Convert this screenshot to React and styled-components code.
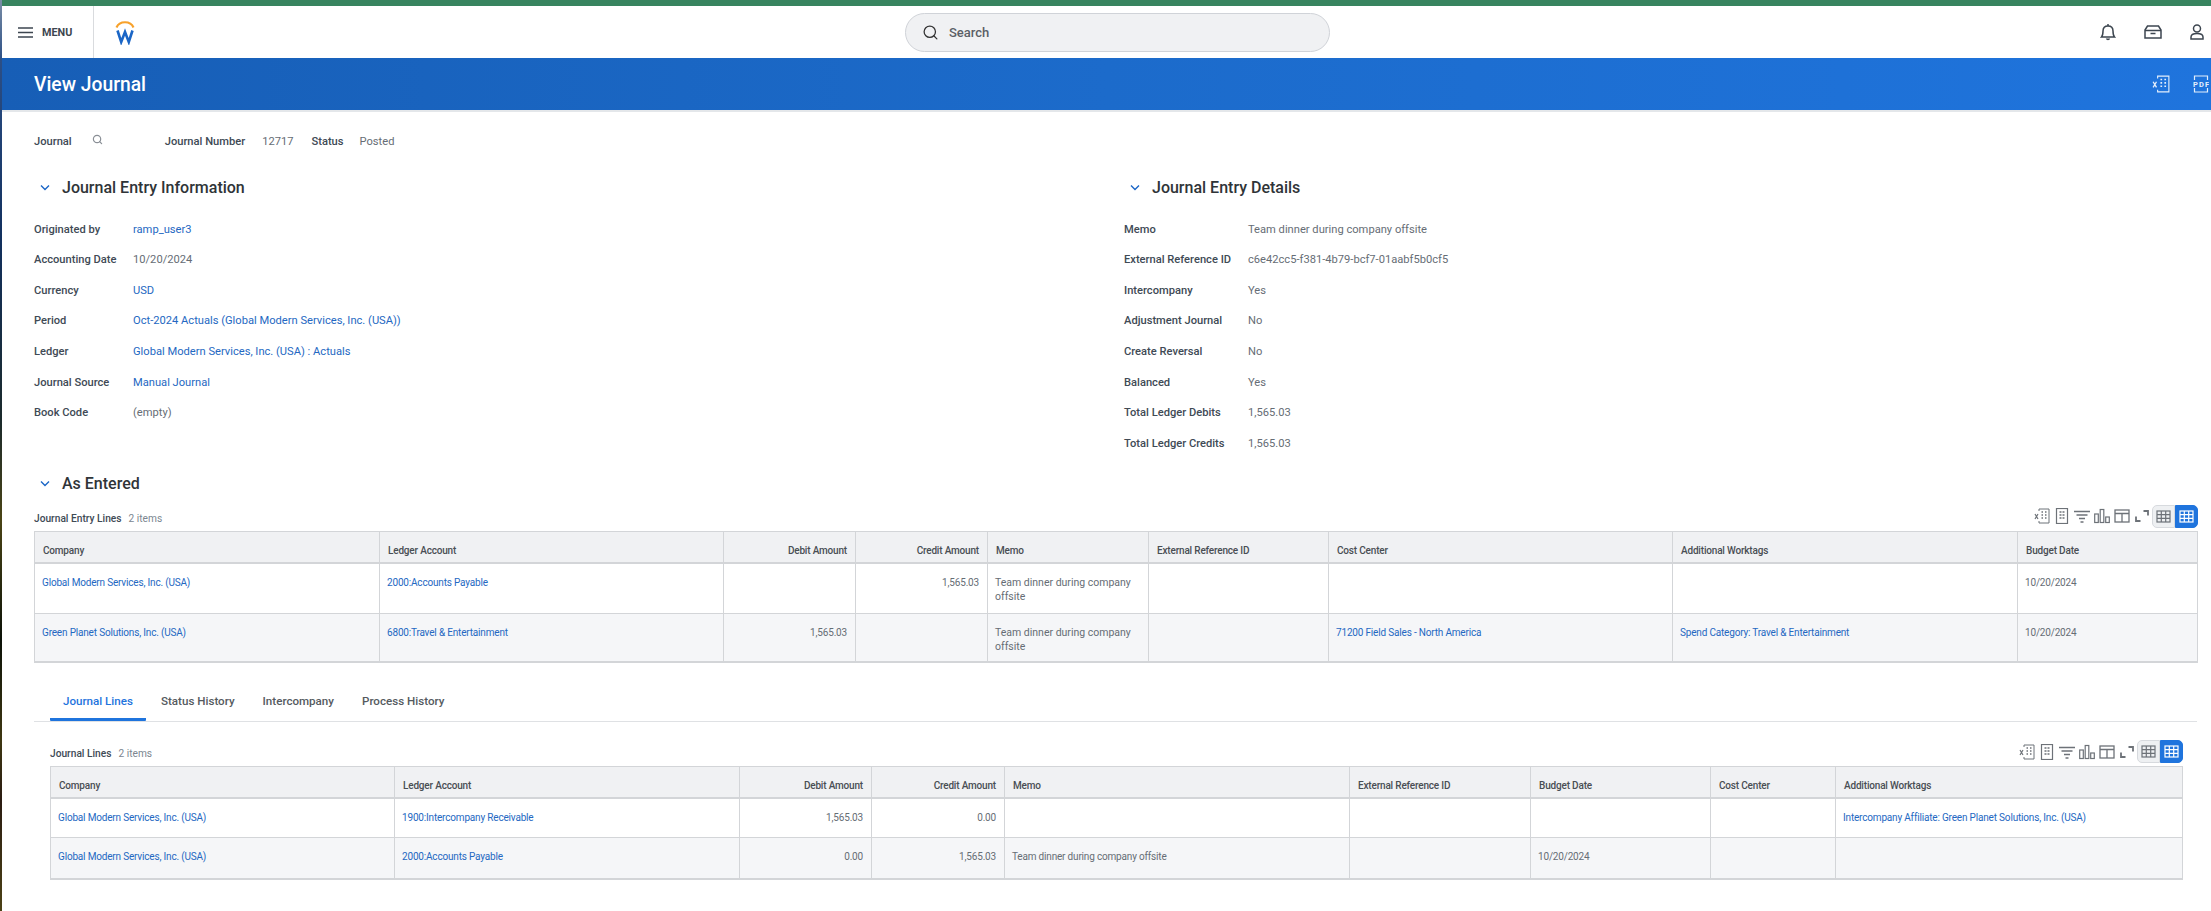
import styled, { createGlobalStyle } from "styled-components";
import { Search } from "lucide-react";

const GlobalStyle = createGlobalStyle`
  html, body {
    margin: 0;
    padding: 0;
    background: #fff;
    font-family: Roboto, "Liberation Sans", sans-serif;
  }
`;

const entryColumns = [
  { label: "Company", width: 345 },
  { label: "Ledger Account", width: 344 },
  { label: "Debit Amount", width: 132, right: true },
  { label: "Credit Amount", width: 132, right: true },
  { label: "Memo", width: 161 },
  { label: "External Reference ID", width: 180 },
  { label: "Cost Center", width: 344 },
  { label: "Additional Worktags", width: 345 },
  { label: "Budget Date", width: 180 },
];

const entryRows = [
  [
    { text: "Global Modern Services, Inc. (USA)", link: true },
    { text: "2000:Accounts Payable", link: true },
    {},
    { text: "1,565.03" },
    { text: "Team dinner during company offsite", large: true },
    {},
    {},
    {},
    { text: "10/20/2024" },
  ],
  [
    { text: "Green Planet Solutions, Inc. (USA)", link: true },
    { text: "6800:Travel & Entertainment", link: true },
    { text: "1,565.03" },
    {},
    { text: "Team dinner during company offsite", large: true },
    {},
    { text: "71200 Field Sales - North America", link: true },
    { text: "Spend Category: Travel & Entertainment", link: true },
    { text: "10/20/2024" },
  ],
];

const lineColumns = [
  { label: "Company", width: 344 },
  { label: "Ledger Account", width: 345 },
  { label: "Debit Amount", width: 132, right: true },
  { label: "Credit Amount", width: 133, right: true },
  { label: "Memo", width: 345 },
  { label: "External Reference ID", width: 181 },
  { label: "Budget Date", width: 180 },
  { label: "Cost Center", width: 125 },
  { label: "Additional Worktags", width: 347 },
];

const lineRows = [
  [
    { text: "Global Modern Services, Inc. (USA)", link: true },
    { text: "1900:Intercompany Receivable", link: true },
    { text: "1,565.03" },
    { text: "0.00" },
    {},
    {},
    {},
    {},
    { text: "Intercompany Affiliate: Green Planet Solutions, Inc. (USA)", link: true },
  ],
  [
    { text: "Global Modern Services, Inc. (USA)", link: true },
    { text: "2000:Accounts Payable", link: true },
    { text: "0.00" },
    { text: "1,565.03" },
    { text: "Team dinner during company offsite" },
    {},
    { text: "10/20/2024" },
    {},
    {},
  ],
];

const infoFields = [
  { label: "Originated by", value: "ramp_user3", link: true },
  { label: "Accounting Date", value: "10/20/2024" },
  { label: "Currency", value: "USD", link: true },
  { label: "Period", value: "Oct-2024 Actuals (Global Modern Services, Inc. (USA))", link: true },
  { label: "Ledger", value: "Global Modern Services, Inc. (USA) : Actuals", link: true },
  { label: "Journal Source", value: "Manual Journal", link: true },
  { label: "Book Code", value: "(empty)" },
];

const detailFields = [
  { label: "Memo", value: "Team dinner during company offsite" },
  { label: "External Reference ID", value: "c6e42cc5-f381-4b79-bcf7-01aabf5b0cf5" },
  { label: "Intercompany", value: "Yes" },
  { label: "Adjustment Journal", value: "No" },
  { label: "Create Reversal", value: "No" },
  { label: "Balanced", value: "Yes" },
  { label: "Total Ledger Debits", value: "1,565.03" },
  { label: "Total Ledger Credits", value: "1,565.03" },
];

const Frame = styled.div`
  display: flex;
  height: 911px;
  overflow: hidden;
`;

const DesktopEdge = styled.div`
  width: 2px;
  flex: none;
  background: linear-gradient(
    180deg,
    #7a8ea6 0,
    #2c4f86 60px,
    #12305e 240px,
    #1b2a2c 420px,
    #4a4416 520px,
    #0c1208 640px,
    #3e3712 740px,
    #2b1c12 800px,
    #4c4216 911px
  );
`;

const Window = styled.div`
  flex: 1;
  min-width: 0;
  background: #fff;
`;

const GreenStrip = styled.div`
  height: 6px;
  background: #38845f;
`;

const Nav = styled.header`
  height: 52px;
  display: grid;
  grid-template-columns: 903px 425px 1fr;
  align-items: center;
`;

const NavLeft = styled.div`
  display: flex;
  align-items: center;
  height: 100%;
`;

const MenuButton = styled.div`
  width: 92px;
  height: 100%;
  box-sizing: border-box;
  display: flex;
  align-items: center;
  gap: 9px;
  padding-left: 16px;
  border-right: 1px solid #d9dbde;
  color: #3d4650;
  font-size: 10.8px;
  font-weight: 700;
`;

const LogoWrap = styled.div`
  margin-left: 21px;
  display: flex;
`;

const SearchBox = styled.div`
  height: 39px;
  box-sizing: border-box;
  display: flex;
  align-items: center;
  gap: 10px;
  padding-left: 16px;
  border: 1px solid #d0d3d8;
  border-radius: 20px;
  background: #f0f1f3;
  color: #5b5f66;
  font-size: 13px;
  font-weight: 500;
`;

const NavIcons = styled.div`
  display: flex;
  justify-content: flex-end;
  align-items: center;
  gap: 28px;
  padding-right: 7px;
  color: #3d4650;
`;

const Banner = styled.div`
  height: 52px;
  display: flex;
  align-items: center;
  justify-content: space-between;
  padding: 0 2px 0 32px;
  background: linear-gradient(90deg, #175eb6 0%, #1c6bcb 50%, #1f74dd 100%);
  border-bottom: 2px solid #e4e7ea;
`;

const PageTitle = styled.h1`
  margin: 0;
  color: #fff;
  font-size: 19.3px;
  font-weight: 500;
`;

const BannerIcons = styled.div`
  display: flex;
  align-items: center;
  gap: 23px;
  color: #e3eefb;
`;

const Content = styled.main`
  padding: 19px 14px 0 32px;
`;

const MetaRow = styled.div`
  height: 20px;
  display: flex;
  align-items: center;
  font-size: 11.15px;
`;

const MetaLabel = styled.span`
  color: #404a55;
  font-weight: 500;
  margin-right: ${(p) => p.$gap}px;
`;

const MetaValue = styled.span`
  color: #666d75;
  margin-right: ${(p) => p.$gap || 0}px;
`;

const MetaSearch = styled.span`
  display: flex;
  color: #8a8f96;
  margin: -3px 62px 0 0;
`;

const TwoColumns = styled.div`
  display: grid;
  grid-template-columns: 1090px 1fr;
  margin-top: 24px;
`;

const SectionHead = styled.div`
  height: 24px;
  display: flex;
  align-items: center;
  gap: 12px;
  padding-left: 6px;
  margin-top: ${(p) => p.$top || 0}px;
  color: #2f3438;
  font-size: 16px;
  font-weight: 500;
`;

const Chevron = styled.svg`
  width: 10px;
  height: 7px;
  fill: none;
  stroke: #1b66c6;
  stroke-width: 1.4;
`;

const Fields = styled.dl`
  margin: 14.7px 0 0;
`;

const FieldRow = styled.div`
  height: 30.67px;
  display: flex;
  align-items: center;
  font-size: 11.15px;
`;

const FieldLabel = styled.dt`
  width: ${(p) => p.$width}px;
  flex: none;
  color: #404a55;
  font-weight: 500;
`;

const FieldValue = styled.dd`
  margin: 0;
  color: ${(p) => (p.$link ? "#2468c2" : "#666d75")};
`;

const TableBlock = styled.section`
  margin: ${(p) => p.$top}px 0 0 ${(p) => p.$inset}px;
  width: ${(p) => p.$width}px;
`;

const TableBar = styled.div`
  height: 23px;
  margin-bottom: 3px;
  display: flex;
  align-items: center;
  justify-content: space-between;
`;

const TableName = styled.div`
  margin-top: 4px;
  font-size: 10.2px;
  font-weight: 500;
  color: #404a55;

  span {
    margin-left: 7px;
    font-weight: 400;
    color: #7c8690;
  }
`;

const Tools = styled.div`
  display: flex;
  align-items: center;
  gap: 4px;
  margin-right: -1px;
  color: #6d7278;
`;

const ViewToggle = styled.div`
  display: flex;
  margin-left: -2px;
`;

const ToggleButton = styled.div`
  width: 23px;
  height: 23px;
  box-sizing: border-box;
  display: flex;
  align-items: center;
  justify-content: center;
  background: ${(p) => (p.$active ? "#1f74dd" : "#eef0f2")};
  color: ${(p) => (p.$active ? "#fff" : "#6d7278")};
  border: 1px solid ${(p) => (p.$active ? "#1f74dd" : "#d7dade")};
  border-radius: ${(p) => (p.$active ? "0 5px 5px 0" : "5px 0 0 5px")};
`;

const Table = styled.table`
  width: 100%;
  table-layout: fixed;
  border-collapse: collapse;
  border: 1px solid #d3d5d8;
  border-bottom-width: 2px;
  font-size: 10px;
  letter-spacing: -0.18px;
`;

const Col = styled.col`
  width: ${(p) => p.$width}px;
`;

const HeadCell = styled.th`
  height: ${(p) => p.$height}px;
  box-sizing: border-box;
  padding: 6px 8px 0;
  background: #f0f1f3;
  border-left: 1px solid #d3d5d8;
  border-bottom: 2px solid #d3d5d8;
  color: #494e54;
  font-weight: 500;
  text-align: ${(p) => (p.$right ? "right" : "left")};
`;

const BodyRow = styled.tr`
  height: ${(p) => p.$height}px;
  background: ${(p) => (p.$striped ? "#f5f6f8" : "#fff")};
`;

const BodyCell = styled.td`
  padding: 12px 8px 0 7px;
  vertical-align: top;
  line-height: 14px;
  border-left: 1px solid #d3d5d8;
  border-top: 1px solid #d3d5d8;
  color: ${(p) => (p.$link ? "#2468c2" : "#666d75")};
  font-size: ${(p) => (p.$large ? "10.5px" : "inherit")};
  letter-spacing: ${(p) => (p.$large ? "0" : "inherit")};
  text-align: ${(p) => (p.$right ? "right" : "left")};
`;

const TabStrip = styled.nav`
  margin-top: 20px;
  height: 39px;
  box-sizing: border-box;
  padding-left: 16px;
  display: flex;
  gap: 2px;
  border-bottom: 1px solid #dfe1e4;
`;

const Tab = styled.div`
  padding: 11px 13px 0;
  font-size: 11.6px;
  font-weight: 500;
  color: ${(p) => (p.$active ? "#1f74dd" : "#555a60")};
  border-bottom: ${(p) => (p.$active ? "3px solid #1f74dd" : "none")};
  border-radius: 0 0 1px 1px;
`;

const Logo = () => (
  <svg width="20" height="26" viewBox="0 0 20 26" fill="none">
    <path d="M1.5 8.5C4.5 1.5 15.5 1.5 18.5 8.5" stroke="#f7a12b" strokeWidth="2.2" />
    <path d="M2.5 11.5L6.2 23L10 13L13.8 23L17.5 11.5" stroke="#1b66c6" strokeWidth="2.6" />
  </svg>
);

const MenuIcon = () => (
  <svg width="15" height="11" viewBox="0 0 15 11" stroke="currentColor" strokeWidth="1.3">
    <path d="M0 1h15M0 5.5h15M0 10h15" />
  </svg>
);

const BellIcon = () => (
  <svg width="16" height="18" viewBox="0 0 16 18" fill="none" stroke="currentColor" strokeWidth="1.5">
    <path d="M1.5 14c1.5-1.5 1.5-3 1.5-6 0-3 2-5 5-5s5 2 5 5c0 3 0 4.500 1.500 6z" />
    <path d="M8 1v2M6.500 15.500c.5 1.300 2.500 1.300 3 0" />
  </svg>
);

const InboxIcon = () => (
  <svg width="18" height="14" viewBox="0 0 18 14" fill="none" stroke="currentColor" strokeWidth="1.5">
    <path d="M1 5L3.500 1h11L17 5v8H1z" />
    <path d="M1 5.500h16M6.500 8.500h5" />
  </svg>
);

const UserIcon = () => (
  <svg width="14" height="16" viewBox="0 0 14 16" fill="none" stroke="currentColor" strokeWidth="1.5">
    <circle cx="7" cy="4.500" r="3.500" />
    <path d="M1 15v-2c0-2 2-3.500 6-3.500s6 1.500 6 3.500v2z" />
  </svg>
);

const ExcelIcon = ({ size = 16 }) => (
  <svg width={size} height={size} viewBox="0 0 16 16" fill="none" stroke="currentColor">
    <path d="M5 3V1h10v14H5v-2" />
    <path d="M7.500 4h1.500M11 4h1.500M7.500 7h1.500M11 7h1.500M7.500 10h1.500M11 10h1.500" strokeWidth="1.500" />
    <path d="M1 6l3 5M4 6l-3 5" strokeWidth="1.200" />
  </svg>
);

const PdfIcon = () => (
  <svg width="16" height="18" viewBox="0 0 16 18" fill="none" stroke="currentColor" strokeWidth="1.2">
    <path d="M1.500 5V1h13v4M1.500 13v4h13v-4" />
    <text
      x="0"
      y="11.500"
      fontSize="7.500"
      fontWeight="700"
      textLength="16"
      fontFamily="Roboto, sans-serif"
      fill="currentColor"
      stroke="none"
    >
      PDF
    </text>
  </svg>
);

const DocIcon = () => (
  <svg width="16" height="16" viewBox="0 0 16 16" fill="none" stroke="currentColor">
    <rect x="2.500" y="0.500" width="11" height="15" strokeWidth="1.200" />
    <path d="M5.500 4h2M8.500 4h2M5.500 7h2M8.500 7h2M5.500 10h2M8.500 10h2" strokeWidth="1.500" />
  </svg>
);

const FilterIcon = () => (
  <svg width="16" height="16" viewBox="0 0 16 16" stroke="currentColor" strokeWidth="1.300">
    <path d="M0 3.500h16M2.500 7h11M5 10.500h6M6.500 14h3" />
  </svg>
);

const ChartIcon = () => (
  <svg width="16" height="16" viewBox="0 0 16 16" fill="none" stroke="currentColor" strokeWidth="1.200">
    <rect x="0.700" y="6" width="3.600" height="8.500" />
    <rect x="6.200" y="1.500" width="3.600" height="13" />
    <rect x="11.700" y="9" width="3.600" height="5.500" />
  </svg>
);

const ColumnsIcon = () => (
  <svg width="16" height="16" viewBox="0 0 16 16" fill="none" stroke="currentColor" strokeWidth="1.300">
    <rect x="1" y="2" width="14" height="12" />
    <path d="M1 5.500h14M8 5.500V14" />
  </svg>
);

const ExpandIcon = () => (
  <svg width="16" height="16" viewBox="0 0 16 16" fill="none" stroke="currentColor" strokeWidth="1.800">
    <path d="M9.500 3H14v4.500M2 8.500V13h4.500" />
  </svg>
);

const GridIcon = () => (
  <svg width="15" height="13" viewBox="0 0 15 13" fill="none" stroke="currentColor" strokeWidth="1.200">
    <rect x="1" y="1" width="13" height="11" />
    <path d="M1 4.600h13M1 8.300h13M5.300 1v11M9.700 1v11" />
  </svg>
);

const SectionTitle = ({ children, top }) => (
  <SectionHead $top={top}>
    <Chevron viewBox="0 0 10 7">
      <path d="M1 1.500l4 4 4-4" />
    </Chevron>
    {children}
  </SectionHead>
);

const FieldList = ({ fields, labelWidth }) => (
  <Fields>
    {fields.map((f) => (
      <FieldRow key={f.label}>
        <FieldLabel $width={labelWidth}>{f.label}</FieldLabel>
        <FieldValue $link={f.link}>{f.value}</FieldValue>
      </FieldRow>
    ))}
  </Fields>
);

const DataTable = ({ name, columns, rows, headHeight, rowHeights, inset, width, top }) => (
  <TableBlock $inset={inset} $width={width} $top={top}>
    <TableBar>
      <TableName>
        {name}
        <span>2 items</span>
      </TableName>
      <Tools>
        <ExcelIcon />
        <DocIcon />
        <FilterIcon />
        <ChartIcon />
        <ColumnsIcon />
        <ExpandIcon />
        <ViewToggle>
          <ToggleButton>
            <GridIcon />
          </ToggleButton>
          <ToggleButton $active>
            <GridIcon />
          </ToggleButton>
        </ViewToggle>
      </Tools>
    </TableBar>
    <Table>
      <colgroup>
        {columns.map((c) => (
          <Col key={c.label} $width={c.width} />
        ))}
      </colgroup>
      <thead>
        <tr>
          {columns.map((c) => (
            <HeadCell key={c.label} $right={c.right} $height={headHeight}>
              {c.label}
            </HeadCell>
          ))}
        </tr>
      </thead>
      <tbody>
        {rows.map((row, i) => (
          <BodyRow key={i} $striped={i % 2 === 1} $height={rowHeights[i]}>
            {row.map((cell, j) => (
              <BodyCell key={j} $link={cell.link} $large={cell.large} $right={columns[j].right}>
                {cell.text}
              </BodyCell>
            ))}
          </BodyRow>
        ))}
      </tbody>
    </Table>
  </TableBlock>
);

const App = () => {
  return (
    <>
      <GlobalStyle />
      <Frame>
        <DesktopEdge />
        <Window>
          <GreenStrip />
          <Nav>
            <NavLeft>
              <MenuButton>
                <MenuIcon />
                MENU
              </MenuButton>
              <LogoWrap>
                <Logo />
              </LogoWrap>
            </NavLeft>
            <SearchBox>
              <Search size={17} color="#333" strokeWidth={1.8} />
              Search
            </SearchBox>
            <NavIcons>
              <BellIcon />
              <InboxIcon />
              <UserIcon />
            </NavIcons>
          </Nav>
          <Banner>
            <PageTitle>View Journal</PageTitle>
            <BannerIcons>
              <ExcelIcon size={18} />
              <PdfIcon />
            </BannerIcons>
          </Banner>
          <Content>
            <MetaRow>
              <MetaLabel $gap={20}>Journal</MetaLabel>
              <MetaSearch>
                <Search size={11} strokeWidth={2.6} />
              </MetaSearch>
              <MetaLabel $gap={17}>Journal Number</MetaLabel>
              <MetaValue $gap={18}>12717</MetaValue>
              <MetaLabel $gap={16}>Status</MetaLabel>
              <MetaValue>Posted</MetaValue>
            </MetaRow>
            <TwoColumns>
              <div>
                <SectionTitle>Journal Entry Information</SectionTitle>
                <FieldList fields={infoFields} labelWidth={99} />
              </div>
              <div>
                <SectionTitle>Journal Entry Details</SectionTitle>
                <FieldList fields={detailFields} labelWidth={124} />
              </div>
            </TwoColumns>
            <SectionTitle top={13}>As Entered</SectionTitle>
            <DataTable
              name="Journal Entry Lines"
              columns={entryColumns}
              rows={entryRows}
              headHeight={32}
              rowHeights={[50, 49]}
              inset={0}
              width={2163}
              top={9}
            />
            <TabStrip>
              <Tab $active>Journal Lines</Tab>
              <Tab>Status History</Tab>
              <Tab>Intercompany</Tab>
              <Tab>Process History</Tab>
            </TabStrip>
            <DataTable
              name="Journal Lines"
              columns={lineColumns}
              rows={lineRows}
              headHeight={31}
              rowHeights={[40, 41]}
              inset={16}
              width={2132}
              top={18}
            />
          </Content>
        </Window>
      </Frame>
    </>
  );
};

export default App;
